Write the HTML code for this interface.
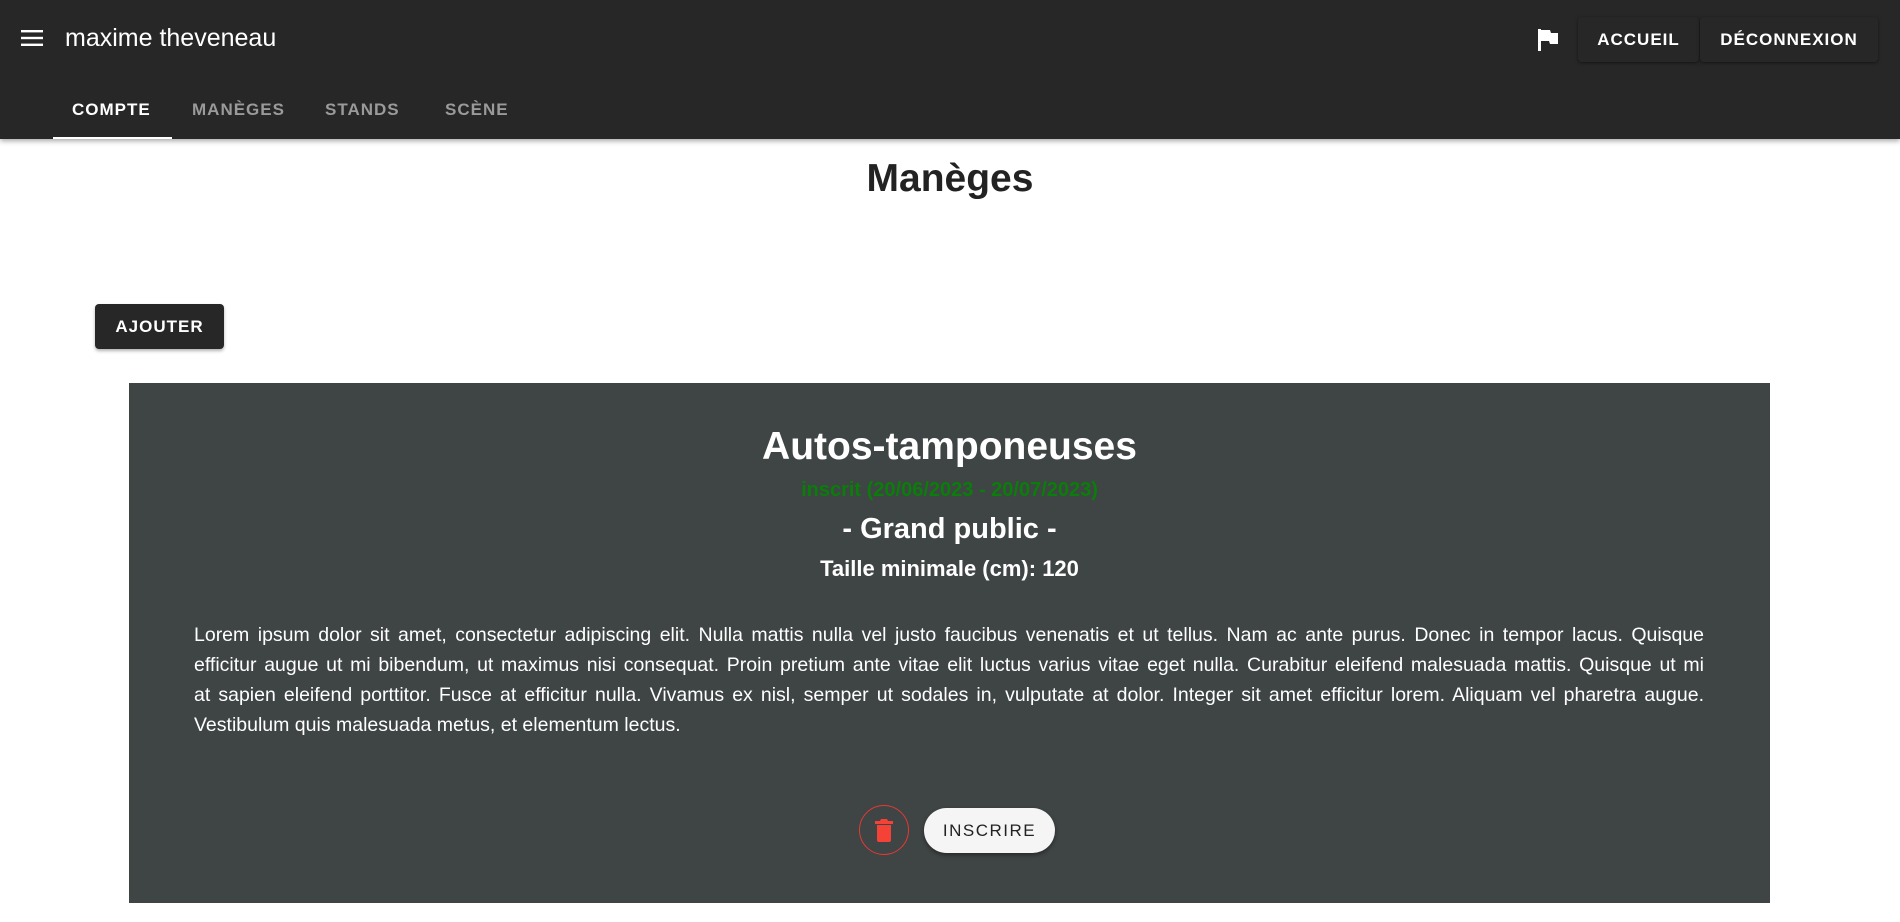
<!DOCTYPE html>
<html><head><meta charset="utf-8">
<style>
*{margin:0;padding:0;box-sizing:border-box}
body{width:1900px;height:922px;overflow:hidden;background:#fff;font-family:"Liberation Sans",Arial,sans-serif;position:relative}
.bar{position:absolute;left:0;top:0;width:1900px;height:139px;background:#272727;box-shadow:0 2px 5px rgba(0,0,0,.35)}
.ham{position:absolute;left:21px;top:29px}
.name{position:absolute;left:65px;top:24px;color:#fff;font-size:25px}
.tab{position:absolute;top:100px;font-size:17px;font-weight:bold;letter-spacing:1px;color:#9a9a9a}
.ul{position:absolute;left:53px;top:137px;width:119px;height:2px;background:#fff}
.rb{position:absolute;top:17px;height:45px;border-radius:4px;background:#272727;box-shadow:0 1px 3px rgba(0,0,0,.5);color:#fff;font-weight:bold;font-size:17px;letter-spacing:1px;line-height:45px;text-align:center}
h1{position:absolute;left:0;width:1900px;top:157px;text-align:center;font-size:39px;color:#222;font-weight:bold}
.add{position:absolute;left:95px;top:304px;width:129px;height:45px;border-radius:4px;background:#272727;color:#fff;font-weight:bold;font-size:17px;letter-spacing:1px;line-height:45px;text-align:center;box-shadow:0 2px 3px rgba(0,0,0,.3)}
.card{position:absolute;left:129px;top:383px;width:1641px;height:520px;background:#3f4444;color:#fff;text-align:center}
.t{position:absolute;left:0;width:100%;top:42px;font-size:39px;font-weight:bold}
.g{position:absolute;left:0;width:100%;top:96px;font-size:20px;font-weight:bold;color:#0a7d0a}
.gp{position:absolute;left:0;width:100%;top:130px;font-size:29px;font-weight:bold}
.tm{position:absolute;left:0;width:100%;top:173px;font-size:22px;font-weight:bold}
.p{position:absolute;left:65px;width:1510px;top:237px;font-size:19.5px;line-height:30px;text-align:justify}
.p div{text-align:justify;text-align-last:justify}
.p div.l{text-align-last:left}
.del{position:absolute;left:730px;top:422px;width:50px;height:50px;border:1px solid #e53935;border-radius:50%}
.ins{position:absolute;left:795px;top:425px;width:131px;height:45px;border-radius:23px;background:#f5f5f5;color:#222;font-size:17px;letter-spacing:1.5px;line-height:45px;box-shadow:0 2px 4px rgba(0,0,0,.4)}
</style></head><body>
<div class="bar">
<svg class="ham" width="22" height="18" viewBox="0 0 22 18"><rect y="1" width="22" height="2.4" fill="#fff"/><rect y="7.8" width="22" height="2.4" fill="#fff"/><rect y="14.6" width="22" height="2.4" fill="#fff"/></svg>
<div class="name">maxime theveneau</div>
<div class="tab" style="left:72px;color:#fff">COMPTE</div>
<div class="tab" style="left:192px">MANÈGES</div>
<div class="tab" style="left:325px">STANDS</div>
<div class="tab" style="left:445px">SCÈNE</div>
<div class="ul"></div>
<svg style="position:absolute;left:1537px;top:29px" width="22" height="22" viewBox="0 0 22 22"><path d="M1 0h3v22H1z M4 1h9l1 3h7v11h-8l-1-3H4z" fill="#fff"/></svg>
<div class="rb" style="left:1578px;width:121px">ACCUEIL</div>
<div class="rb" style="left:1700px;width:178px">DÉCONNEXION</div>
</div>
<h1>Manèges</h1>
<div class="add">AJOUTER</div>
<div class="card">
<div class="t">Autos-tamponeuses</div>
<div class="g">inscrit (20/06/2023 - 20/07/2023)</div>
<div class="gp">- Grand public -</div>
<div class="tm">Taille minimale (cm): 120</div>
<div class="p">
<div>Lorem ipsum dolor sit amet, consectetur adipiscing elit. Nulla mattis nulla vel justo faucibus venenatis et ut tellus. Nam ac ante purus. Donec in tempor lacus. Quisque</div>
<div>efficitur augue ut mi bibendum, ut maximus nisi consequat. Proin pretium ante vitae elit luctus varius vitae eget nulla. Curabitur eleifend malesuada mattis. Quisque ut mi</div>
<div>at sapien eleifend porttitor. Fusce at efficitur nulla. Vivamus ex nisl, semper ut sodales in, vulputate at dolor. Integer sit amet efficitur lorem. Aliquam vel pharetra augue.</div>
<div class="l">Vestibulum quis malesuada metus, et elementum lectus.</div>
</div>
<div class="del"><svg style="position:absolute;left:15px;top:13px" width="18" height="23" viewBox="0 0 18 23"><path d="M0 2h5l1-2h6l1 2h5v3H0z M2 6h14v15a2 2 0 0 1-2 2H4a2 2 0 0 1-2-2z" fill="#f44336"/></svg></div>
<div class="ins">INSCRIRE</div>
</div>
</body></html>
